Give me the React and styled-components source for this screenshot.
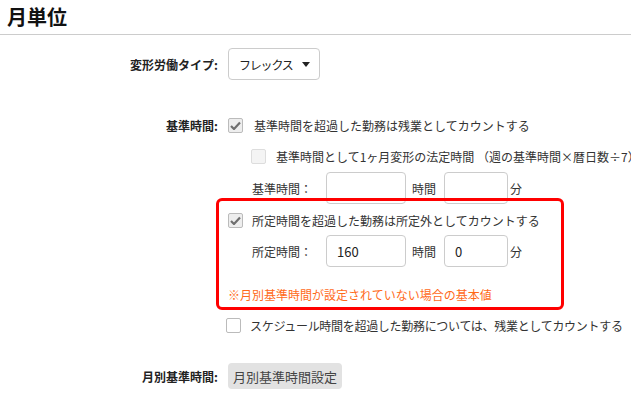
import React from 'react';
import styled, { createGlobalStyle } from 'styled-components';

const GlobalStyle = createGlobalStyle`
  html, body {
    margin: 0;
    padding: 0;
    background: #ffffff;
  }
  body {
    font-family: "Noto Sans CJK JP", "Noto Sans", sans-serif;
    font-size: 12px;
    color: #333333;
  }
`;

const Page = styled.div`
  width: 631px;
  height: 396px;
  overflow: hidden;
`;

const Header = styled.div`
  height: 34px;
  border-bottom: 1px solid #cccccc;
  display: flex;
  align-items: center;
  padding-left: 7px;
`;

const Title = styled.h1`
  margin: 0;
  font-size: 20px;
  font-weight: bold;
  color: #111111;
  line-height: 1;
`;

const Row = styled.div`
  display: flex;
  align-items: center;
  height: ${(p) => p.h || 20}px;
  margin-top: ${(p) => p.mt || 0}px;
  padding-left: ${(p) => p.indent || 0}px;
  white-space: nowrap;
`;

const Label = styled.div`
  width: 228px;
  flex: none;
  text-align: right;
  padding-right: 10px;
  box-sizing: border-box;
  font-weight: bold;
  color: #222222;
`;

const SelectBox = styled.div`
  width: 92px;
  height: 32px;
  box-sizing: border-box;
  border: 1px solid #cccccc;
  border-radius: 4px;
  display: flex;
  align-items: center;
  justify-content: space-between;
  padding: 0 9px 0 10px;
  color: #222222;
`;

const SelectText = styled.span`
  letter-spacing: -1.2px;
`;

const Arrow = styled.span`
  width: 0;
  height: 0;
  border-left: 4px solid transparent;
  border-right: 4px solid transparent;
  border-top: 5px solid #222222;
`;

const Box = styled.span`
  width: 15px;
  height: 15px;
  flex: none;
  box-sizing: border-box;
  border: 1px solid ${(p) => (p.disabled ? '#dddddd' : '#bbbbbb')};
  border-radius: 2px;
  background: ${(p) => (p.checked ? '#eeeeee' : p.disabled ? '#f4f4f4' : '#ffffff')};
  display: flex;
  align-items: center;
  justify-content: center;
  margin-right: ${(p) => p.gap || 10}px;
`;

const CheckText = styled.span`
  color: #333333;
  letter-spacing: ${(p) => p.tight || 0}px;
`;

const Check = ({ checked, disabled, gap }) => (
  <Box checked={checked} disabled={disabled} gap={gap}>
    {checked && (
      <svg width="11" height="9" viewBox="0 0 11 9">
        <path d="M1 5 L4 8 L10 1.5" stroke="#6f6f6f" strokeWidth="2.2" fill="none" />
      </svg>
    )}
  </Box>
);

const FieldLabel = styled.span`
  width: 74px;
  flex: none;
  color: #333333;
`;

const Input = styled.div`
  width: ${(p) => p.w}px;
  height: 32px;
  box-sizing: border-box;
  border: 1px solid #cccccc;
  border-radius: 4px;
  background: #ffffff;
  display: flex;
  align-items: center;
  padding-left: 10px;
  font-size: 13px;
  color: #222222;
`;

const Unit = styled.span`
  margin: 0 ${(p) => p.r || 0}px 0 ${(p) => p.l || 0}px;
  color: #333333;
`;

const Highlight = styled.div`
  position: relative;
  width: 348px;
  box-sizing: border-box;
  margin: -6px 0 0 216px;
  border: 3px solid #ff0000;
  border-radius: 6px;
  padding: 9px 0 3px 9px;
`;

const Note = styled.div`
  height: 20px;
  margin-top: 17px;
  display: flex;
  align-items: center;
  color: #ff6a1a;
`;

const GrayButton = styled.button`
  height: 26px;
  padding: 0 5px;
  border: none;
  border-radius: 4px;
  background: #e2e2e2;
  color: #444444;
  font-family: inherit;
  font-size: 13px;
`;

const TimeFields = ({ label, hours, minutes }) => (
  <>
    <FieldLabel>{label}</FieldLabel>
    <Input w={80}>{hours}</Input>
    <Unit l={6} r={8}>時間</Unit>
    <Input w={64}>{minutes}</Input>
    <Unit l={2}>分</Unit>
  </>
);

export default function App() {
  return (
    <Page>
      <GlobalStyle />
      <Header>
        <Title>月単位</Title>
      </Header>

      <Row h={32} mt={13}>
        <Label>変形労働タイプ:</Label>
        <SelectBox>
          <SelectText>フレックス</SelectText>
          <Arrow />
        </SelectBox>
      </Row>

      <Row mt={35}>
        <Label>基準時間:</Label>
        <Check checked gap={11} />
        <CheckText>基準時間を超過した勤務は残業としてカウントする</CheckText>
      </Row>

      <Row mt={11} indent={251}>
        <Check disabled />
        <CheckText>基準時間として1ヶ月変形の法定時間 （週の基準時間×暦日数÷7）を使用する</CheckText>
      </Row>

      <Row h={32} mt={6} indent={252}>
        <TimeFields label="基準時間：" hours="" minutes="" />
      </Row>

      <Highlight>
        <Row>
          <Check checked gap={9} />
          <CheckText>所定時間を超過した勤務は所定外としてカウントする</CheckText>
        </Row>
        <Row h={32} mt={5} indent={24}>
          <TimeFields label="所定時間：" hours="160" minutes="0" />
        </Row>
        <Note>※月別基準時間が設定されていない場合の基本値</Note>
      </Highlight>

      <Row mt={5} indent={226}>
        <Check gap={9} />
        <CheckText tight={-0.3}>スケジュール時間を超過した勤務については、残業としてカウントする</CheckText>
      </Row>

      <Row h={26} mt={28}>
        <Label>月別基準時間:</Label>
        <GrayButton>月別基準時間設定</GrayButton>
      </Row>
    </Page>
  );
}
